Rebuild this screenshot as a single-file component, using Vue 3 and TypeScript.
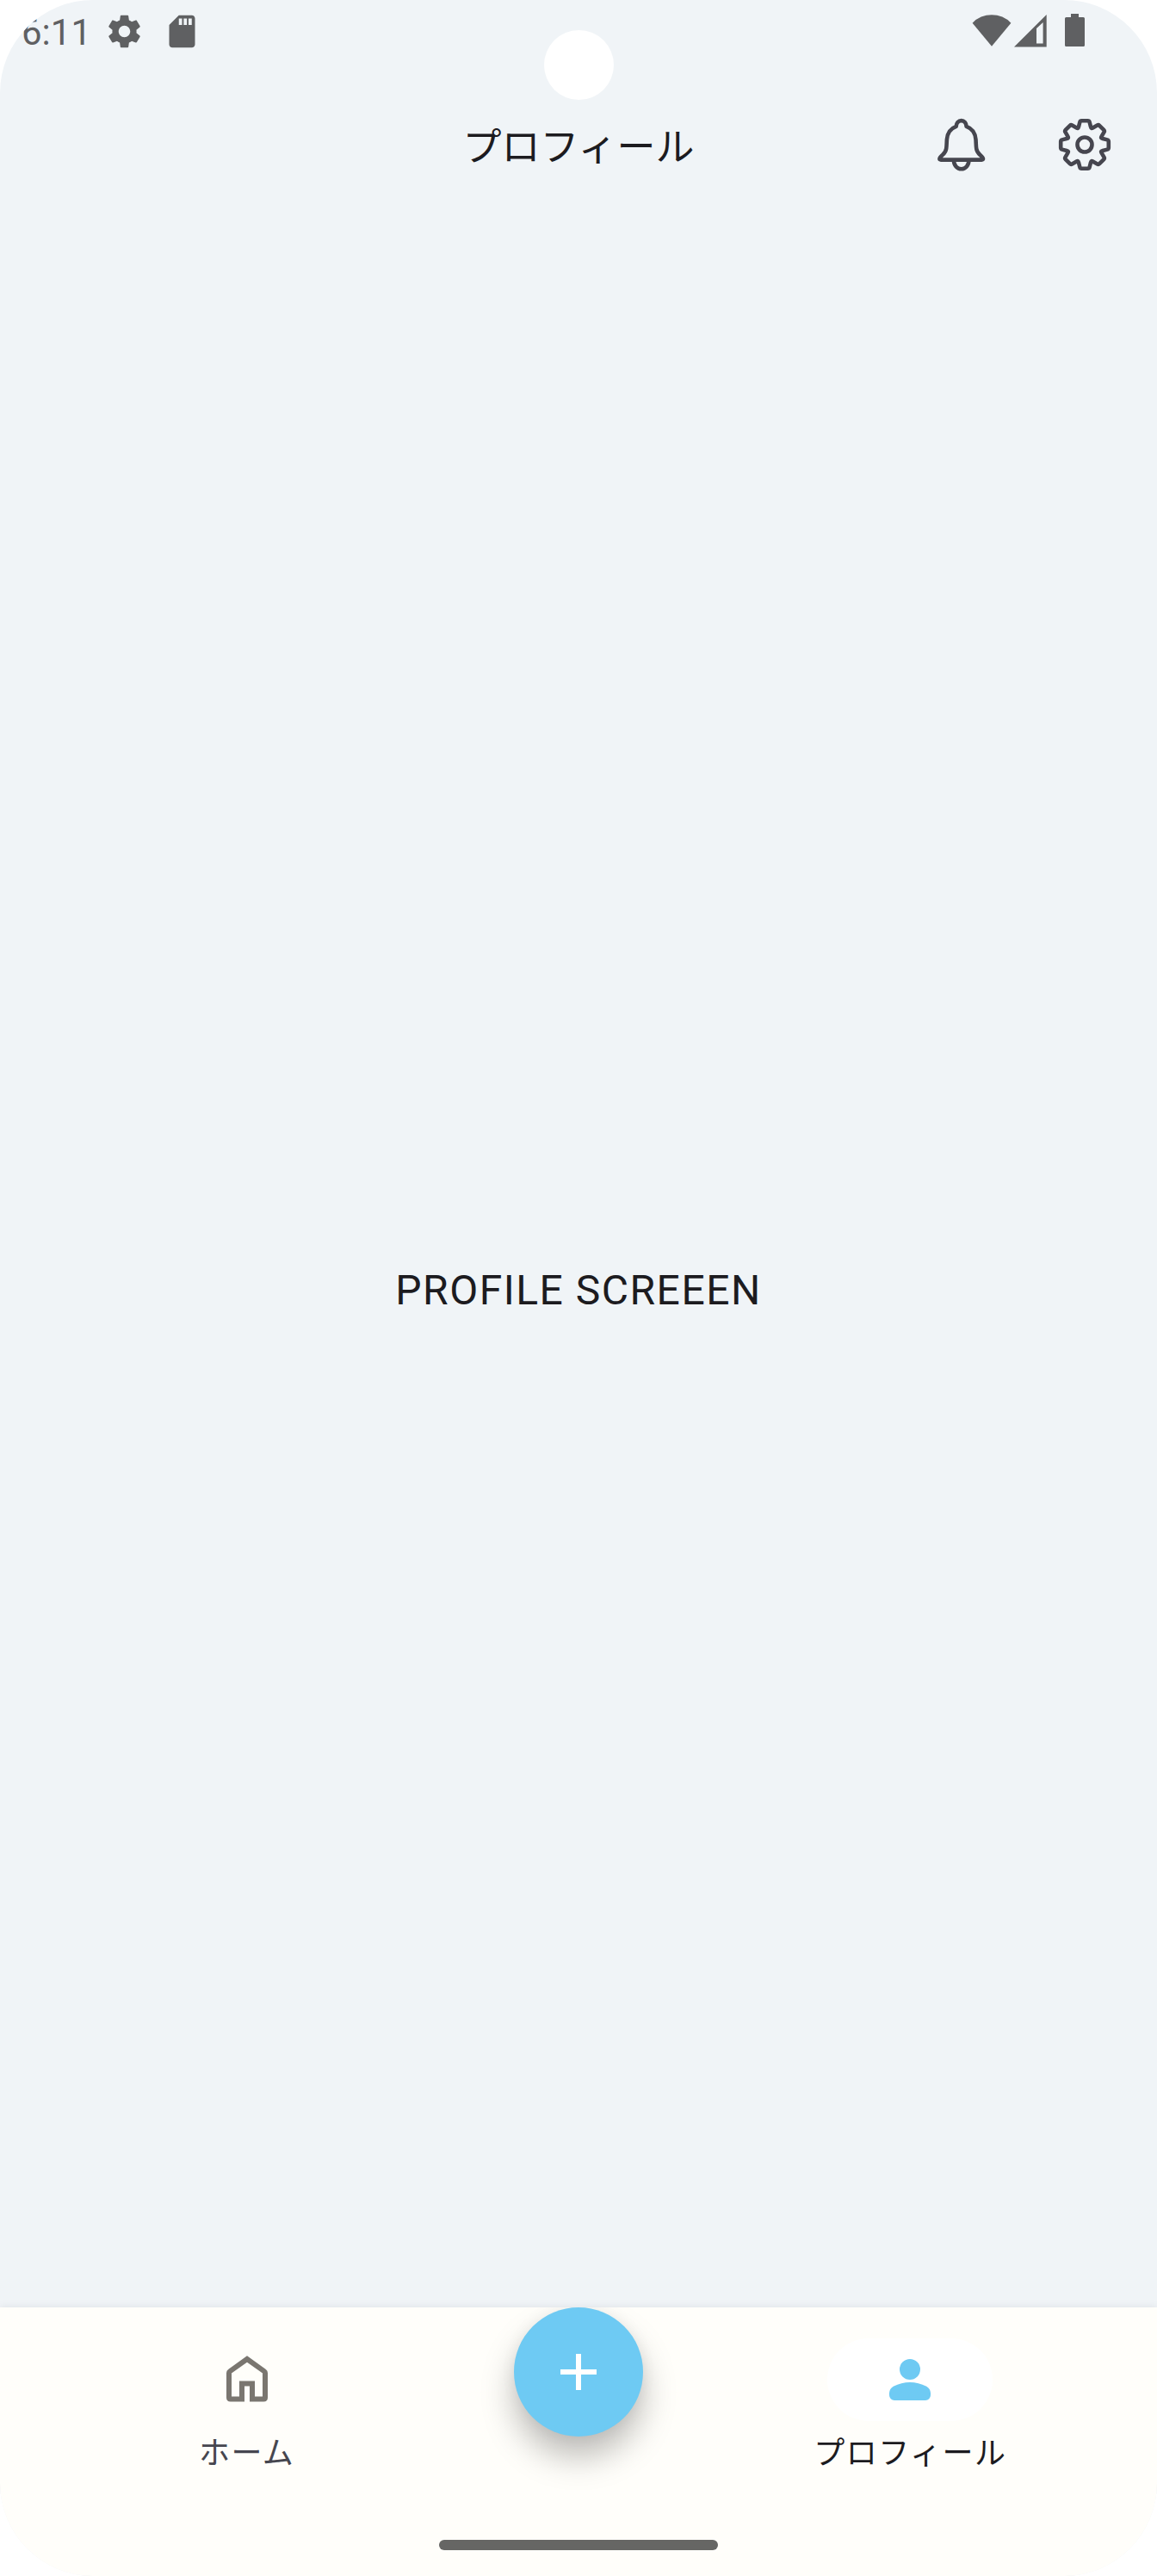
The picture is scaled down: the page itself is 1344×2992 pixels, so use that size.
<script setup lang="ts">
interface Point {
  x: number
  y: number
}

// Outline of an eight-toothed cog centred on the origin, with softened corners.
const cogPath = (): string => {
  const tooth: Point[] = [
    { x: -7.4, y: -19.4 },
    { x: -5.2, y: -27.8 },
    { x: 5.2, y: -27.8 },
    { x: 7.4, y: -19.4 },
  ]
  const points: Point[] = []
  for (let i = 0; i < 8; i++) {
    const a = (i * Math.PI) / 4
    for (const p of tooth) {
      points.push({
        x: p.x * Math.cos(a) - p.y * Math.sin(a),
        y: p.x * Math.sin(a) + p.y * Math.cos(a),
      })
    }
  }
  const toward = (from: Point, to: Point, r: number): string => {
    const len = Math.hypot(to.x - from.x, to.y - from.y)
    const t = Math.min(r / len, 0.5)
    return `${(from.x + (to.x - from.x) * t).toFixed(2)} ${(from.y + (to.y - from.y) * t).toFixed(2)}`
  }
  return (
    points
      .map((p, i) => {
        const prev = points[(i + points.length - 1) % points.length]
        const next = points[(i + 1) % points.length]
        return `${i ? 'L' : 'M'}${toward(p, prev, 1.6)}Q${p.x.toFixed(2)} ${p.y.toFixed(2)} ${toward(p, next, 1.6)}`
      })
      .join('') + 'Z'
  )
}

const cog = cogPath()
const title = 'プロフィール'
</script>

<template>
  <div class="screen">
    <div class="camera"></div>

    <div class="status">
      <span class="time">6:11</span>
      <svg class="st-gear" viewBox="0 0 24 24">
        <path d="M19.43 12.98c.04-.32.07-.64.07-.98s-.03-.66-.07-.98l2.11-1.65c.19-.15.24-.42.12-.64l-2-3.46c-.12-.22-.39-.3-.61-.22l-2.49 1c-.52-.4-1.08-.73-1.69-.98l-.38-2.65C14.46 2.18 14.25 2 14 2h-4c-.25 0-.46.18-.49.42l-.38 2.65c-.61.25-1.17.59-1.69.98l-2.49-1c-.23-.09-.49 0-.61.22l-2 3.46c-.13.22-.07.49.12.64l2.11 1.65c-.04.32-.07.65-.07.98s.03.66.07.98l-2.11 1.65c-.19.15-.24.42-.12.64l2 3.46c.12.22.39.3.61.22l2.49-1c.52.4 1.08.73 1.69.98l.38 2.65c.03.24.24.42.49.42h4c.25 0 .46-.18.49-.42l.38-2.65c.61-.25 1.17-.59 1.69-.98l2.49 1c.23.09.49 0 .61-.22l2-3.46c.12-.22.07-.49-.12-.64l-2.11-1.65zM12 15.6c-1.98 0-3.6-1.62-3.6-3.6s1.62-3.6 3.6-3.6 3.6 1.62 3.6 3.6-1.62 3.6-3.6 3.6z" />
      </svg>
      <svg class="st-sd" viewBox="0 0 24 24">
        <path d="M18 2h-8L4.02 8 4 20c0 1.1.9 2 2 2h12c1.1 0 2-.9 2-2V4c0-1.1-.9-2-2-2zm-6 6h-2V4h2v4zm3 0h-2V4h2v4zm3 0h-2V4h2v4z" />
      </svg>
      <svg class="st-wifi" viewBox="0 0 46 40">
        <path d="M23 38.7L0.6 11.7A31 31 0 0 1 45.4 11.7Z" />
      </svg>
      <svg class="st-signal" viewBox="0 0 38 40">
        <path fill-rule="evenodd" d="M0 39.5L37.7 2V39.5ZM26 18V35.5H33.6V11Z" />
      </svg>
      <svg class="st-battery" viewBox="0 0 23 38">
        <path d="M7 0H16V4H21.5Q23 4 23 5.5V36.5Q23 38 21.500 38H1.500Q0 38 0 36.500V5.500Q0 4 1.500 4H7Z" />
      </svg>
    </div>

    <header class="appbar">
      <h1 class="title">{{ title }}</h1>
      <svg class="action" viewBox="0 0 72 72">
        <path d="M29.7 14.8C29.9 11 32.2 8.100 35.700 8.100S41.400 11 41.600 14.800C48.600 17.300 51.900 22.500 52.500 30C52.800 34.500 52.700 37 53.200 40.500C53.600 44.200 55.300 46 57.500 47.900C59.300 49.500 60.900 50.900 61 52.400Q61.100 53.600 59.500 53.600H11.900Q10.300 53.600 10.400 52.400C10.500 50.900 12.100 49.500 13.900 47.900C16.100 46 17.800 44.200 18.200 40.500C18.700 37 18.600 34.500 18.900 30C19.500 22.500 22.800 17.300 29.700 14.800Z" />
        <path d="M27 54.500A8.700 9.800 0 0 0 44.400 54.500" />
      </svg>
      <svg class="action cog" viewBox="-36 -36 72 72">
        <path :d="cog" />
        <circle r="8.500" />
      </svg>
    </header>

    <main class="content">PROFILE SCREEEN</main>

    <nav class="nav">
      <div class="tabs">
        <div class="tab">
          <span class="pill">
            <svg class="tab-icon home" viewBox="0 0 24 24">
              <path d="M12 4L18.700 8.800Q19 9 19 9.400V18.900Q19 19.500 18.400 19.500H14V13.500H10V19.500H5.600Q5 19.500 5 18.900V9.400Q5 9 5.300 8.800Z" />
            </svg>
          </span>
          <span class="label">ホーム</span>
        </div>
        <div class="tab center">
          <div class="fab">
            <svg viewBox="0 0 24 24"><path d="M5 11H11V5H13V11H19V13H13V19H11V13H5Z" /></svg>
          </div>
        </div>
        <div class="tab">
          <span class="pill active">
            <svg class="tab-icon person" viewBox="0 0 24 24">
              <circle cx="12" cy="8" r="4" />
              <path d="M4 18v-.8q0-.85.438-1.563.437-.712 1.162-1.087 1.550-.775 3.150-1.163Q10.350 13 12 13t3.250.387q1.600.388 3.150 1.163.725.375 1.162 1.087Q20 16.350 20 17.200v.8q0 .825-.587 1.413Q18.825 20 18 20H6q-.825 0-1.412-.587Q4 18.825 4 18Z" />
            </svg>
          </span>
          <span class="label selected">{{ title }}</span>
        </div>
      </div>
      <div class="handle"></div>
    </nav>
  </div>
</template>

<style>
body {
  background: #ffffff;
}
</style>

<style scoped>
.screen {
  position: relative;
  display: flex;
  flex-direction: column;
  width: 1344px;
  height: 2992px;
  overflow: hidden;
  border-radius: 108px;
  background: #f0f4f7;
  color: #1c1b1f;
  font-family: Roboto, "Noto Sans CJK JP", sans-serif;
}
svg {
  display: block;
  flex: none;
}
.camera {
  position: absolute;
  left: 632px;
  top: 35px;
  width: 81px;
  height: 81px;
  border-radius: 50%;
  background: #ffffff;
}
.status {
  display: flex;
  align-items: flex-start;
  height: 96px;
  padding: 13px 84px 0 25px;
  box-sizing: border-box;
  fill: #5f6062;
  color: #5f6062;
}
.time {
  width: 97px;
  font-size: 42px;
  line-height: 49px;
}
.st-gear,
.st-sd {
  width: 45px;
  height: 45px;
  margin-top: 0.5px;
}
.st-sd {
  margin-left: 21.5px;
}
.st-wifi {
  width: 46px;
  height: 40px;
  margin: 2px 3px 0 auto;
}
.st-signal {
  width: 38px;
  height: 40px;
  margin: 2px 21px 0 0;
}
.st-battery {
  width: 23px;
  height: 38px;
  margin-top: 3px;
}
.appbar {
  display: grid;
  grid-template-columns: 1081px 143px 72px;
  height: 144px;
  align-items: center;
  color: #46464f;
}
.title {
  margin: 0;
  padding-left: 263px;
  color: #1c1b1f;
  font-family: "Noto Sans CJK JP", sans-serif;
  font-size: 45px;
  font-weight: 400;
  line-height: 66px;
  text-align: center;
}
.action {
  width: 72px;
  height: 72px;
  fill: none;
  stroke: currentColor;
  stroke-width: 4.6px;
  stroke-linejoin: round;
}
.content {
  flex: 1;
  display: flex;
  align-items: center;
  justify-content: center;
  padding-top: 78px;
  font-size: 48px;
  line-height: 72px;
  letter-spacing: 1.5px;
}
.nav {
  display: flex;
  flex-direction: column;
  align-items: center;
  height: 312px;
  background: #fffefa;
  box-shadow: 0 0 9px rgba(40, 40, 60, 0.09);
}
.tabs {
  display: flex;
  width: 1156px;
  height: 270px;
}
.tab {
  flex: 1;
  display: flex;
  flex-direction: column;
  align-items: center;
  padding-top: 36px;
}
.tab.center {
  padding-top: 0;
}
.pill {
  display: flex;
  align-items: center;
  justify-content: center;
  width: 192px;
  height: 96px;
  border-radius: 48px;
}
.pill.active {
  background: #ffffff;
}
.tab-icon {
  width: 72px;
  height: 72px;
}
.home {
  fill: none;
  stroke: #7a7670;
  stroke-width: 2px;
  stroke-linejoin: round;
}
.home path {
  stroke-linejoin: miter;
}
.person {
  fill: #6ecaf3;
}
.label {
  margin-top: 10px;
  color: #46464f;
  font-family: "Noto Sans CJK JP", sans-serif;
  font-size: 36px;
  line-height: 48px;
  letter-spacing: 1.5px;
  white-space: nowrap;
}
.label.selected {
  color: #1c1b1f;
}
.fab {
  display: flex;
  align-items: center;
  justify-content: center;
  width: 150px;
  height: 150px;
  border-radius: 50%;
  background: #6ecaf3;
  box-shadow: 0 24px 38px rgba(0, 0, 0, 0.26), 0 0 18px rgba(0, 0, 0, 0.05);
  clip-path: inset(0 -80px -90px -80px);
}
.fab svg {
  width: 72px;
  height: 72px;
  fill: #ffffff;
}
.handle {
  width: 324px;
  height: 12px;
  border-radius: 6px;
  background: #666664;
}
</style>
